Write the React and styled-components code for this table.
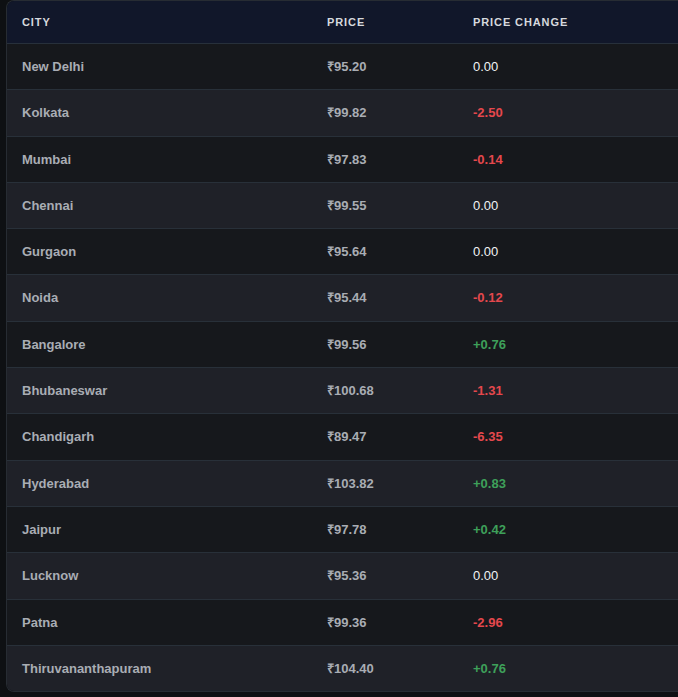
import React from 'react';
import styled, { createGlobalStyle } from 'styled-components';

const GlobalStyle = createGlobalStyle`
  html, body {
    margin: 0;
    padding: 0;
    background: #0e1013;
    overflow: hidden;
  }
  body {
    font-family: 'Liberation Sans', Arial, sans-serif;
  }
`;

const rows = [
  { city: 'New Delhi', price: '₹95.20', change: '0.00' },
  { city: 'Kolkata', price: '₹99.82', change: '-2.50' },
  { city: 'Mumbai', price: '₹97.83', change: '-0.14' },
  { city: 'Chennai', price: '₹99.55', change: '0.00' },
  { city: 'Gurgaon', price: '₹95.64', change: '0.00' },
  { city: 'Noida', price: '₹95.44', change: '-0.12' },
  { city: 'Bangalore', price: '₹99.56', change: '+0.76' },
  { city: 'Bhubaneswar', price: '₹100.68', change: '-1.31' },
  { city: 'Chandigarh', price: '₹89.47', change: '-6.35' },
  { city: 'Hyderabad', price: '₹103.82', change: '+0.83' },
  { city: 'Jaipur', price: '₹97.78', change: '+0.42' },
  { city: 'Lucknow', price: '₹95.36', change: '0.00' },
  { city: 'Patna', price: '₹99.36', change: '-2.96' },
  { city: 'Thiruvananthapuram', price: '₹104.40', change: '+0.76' },
];

const Page = styled.div`
  padding: 0 0 0 6px;
  width: 672px;
`;

const Card = styled.div`
  border: 1px solid #272c33;
  border-right: none;
  border-radius: 8px 0 0 8px;
  overflow: hidden;
`;

const Table = styled.table`
  width: 100%;
  border-collapse: collapse;
  table-layout: fixed;
`;

const HeadRow = styled.tr`
  background: #11172a;
  border-bottom: 1px solid #27303b;
`;

const Th = styled.th`
  width: ${(p) => p.$w || 'auto'};
  text-align: left;
  padding: 14px 15px 13px;
  font-size: 11px;
  font-weight: 700;
  letter-spacing: 0.9px;
  text-transform: uppercase;
  color: #d6d9de;
  line-height: 15px;
`;

const Row = styled.tr`
  background: ${(p) => (p.$alt ? '#1f2128' : '#16181c')};
  border-bottom: 1px solid #283039;
  &:last-child {
    border-bottom: none;
  }
`;

const Td = styled.td`
  padding: 15px 15px 15.3px;
  font-size: 13px;
  font-weight: 700;
  line-height: 15px;
  color: #a9adb4;
  white-space: nowrap;
`;

const Change = styled(Td)`
  color: ${(p) => (p.$dir > 0 ? '#3ea05a' : p.$dir < 0 ? '#e5484d' : '#f2f3f5')};
  font-weight: ${(p) => (p.$dir === 0 ? 400 : 700)};
`;

const dirOf = (v) => (v.startsWith('+') ? 1 : v.startsWith('-') ? -1 : 0);

export default function App() {
  return (
    <>
      <GlobalStyle />
      <Page>
        <Card>
          <Table>
            <thead>
              <HeadRow>
                <Th $w="275px">City</Th>
                <Th $w="116px">Price</Th>
                <Th>Price Change</Th>
              </HeadRow>
            </thead>
            <tbody>
              {rows.map((r, i) => (
                <Row key={r.city} $alt={i % 2 === 1}>
                  <Td>{r.city}</Td>
                  <Td>{r.price}</Td>
                  <Change $dir={dirOf(r.change)}>{r.change}</Change>
                </Row>
              ))}
            </tbody>
          </Table>
        </Card>
      </Page>
    </>
  );
}
